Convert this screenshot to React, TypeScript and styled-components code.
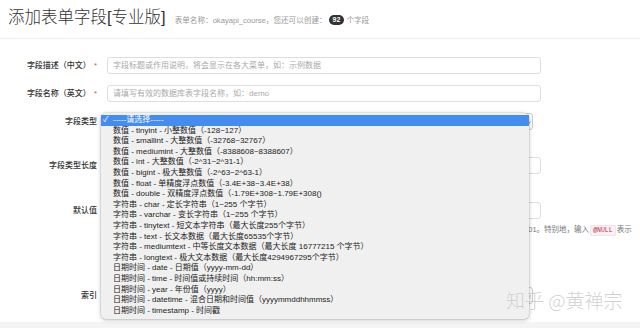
import styled, { createGlobalStyle } from 'styled-components';

const GlobalStyle = createGlobalStyle`
  body {
    margin: 0;
    background: #fff;
    font-family: 'Liberation Sans', 'Noto Sans CJK SC', sans-serif;
    color: #333;
  }
`;

const FONT = `'Liberation Sans', 'Noto Sans CJK SC', sans-serif`;

const Page = styled.div`
  position: relative;
  width: 640px;
  height: 328px;
  overflow: hidden;
  display: flex;
  flex-direction: column;
`;

const Header = styled.div`
  display: flex;
  align-items: baseline;
  gap: 9px;
  height: 39px;
  box-sizing: border-box;
  padding: 5px 8px 0;
  border-bottom: 1px solid #eee;
`;

const Title = styled.h1`
  margin: 0;
  font-family: ${FONT};
  font-size: 16.5px;
  line-height: 24px;
  font-weight: 300;
  color: #333;
`;

const Meta = styled.span`
  display: flex;
  align-items: center;
  font-size: 7.6px;
  color: #999;
`;

const Badge = styled.span`
  display: inline-block;
  margin: 0 2px;
  padding: 0 4px;
  height: 10px;
  line-height: 10px;
  border-radius: 5px;
  background: #333;
  color: #fff;
  font-size: 7px;
  font-weight: bold;
`;

const Form = styled.div`
  flex: 1;
  padding-top: 18px;
`;

const Group = styled.div<{ $gap: number }>`
  display: grid;
  grid-template-columns: 97px 434px;
  column-gap: 10px;
  margin-bottom: ${({ $gap }) => $gap}px;
`;

const Label = styled.label`
  text-align: right;
  font-size: 8px;
  line-height: 17px;
  font-weight: 500;
  color: #333;
`;

const Required = styled.span`
  color: #d9534f;
  margin-left: 3px;
`;

const Control = styled.div`
  position: relative;
`;

const Input = styled.div`
  height: 17px;
  box-sizing: border-box;
  border: 1px solid #ddd;
  border-radius: 3px;
  padding-left: 5px;
  font-size: 8px;
  line-height: 15px;
  color: #aaa;
  background: #fff;
`;

const SelectBox = styled.div`
  position: relative;
  width: 426px;
  height: 17px;
  box-sizing: border-box;
  border: 1px solid #ccc;
  border-radius: 3px;
  background: #fff;

  svg {
    position: absolute;
    right: 1px;
    top: 6px;
  }
`;

const Help = styled.div`
  margin-top: 5px;
  font-size: 7.5px;
  line-height: 12px;
  color: #777;
  white-space: nowrap;
`;

const Code = styled.code`
  padding: 1px 2px;
  margin: 0 1px;
  font-family: 'Liberation Mono', monospace;
  font-size: 6.5px;
  color: #c7254e;
  background: #f9f2f4;
  border: 1px solid #f3e3e8;
  border-radius: 2px;
`;

const Popup = styled.ul`
  position: absolute;
  top: 0;
  left: -6px;
  width: 428px;
  height: 206px;
  box-sizing: border-box;
  margin: 0;
  padding: 2px 0 0;
  list-style: none;
  background: #f0f0f0;
  border-radius: 5px;
  box-shadow: 0 1px 4px rgba(0, 0, 0, 0.25), 0 0 0 0.5px rgba(0, 0, 0, 0.12);
  z-index: 2;
`;

const Option = styled.li<{ $active?: boolean }>`
  position: relative;
  height: 10.6px;
  line-height: 10.6px;
  padding-left: 12px;
  font-size: 8px;
  white-space: nowrap;
  color: ${({ $active }) => ($active ? '#fff' : '#222')};
  background: ${({ $active }) => ($active ? '#448cf0' : 'transparent')};
`;

const Check = styled.span`
  position: absolute;
  left: 2px;
  top: 0;
`;

const Watermark = styled.div`
  position: absolute;
  left: 506px;
  top: 289px;
  font-family: 'Noto Sans CJK SC', sans-serif;
  font-size: 19px;
  line-height: 22px;
  font-weight: 300;
  color: rgba(140, 140, 140, 0.42);
  text-shadow: 0 0 1px rgba(255, 255, 255, 0.9);
  white-space: nowrap;
  z-index: 3;
`;

const Footer = styled.div`
  height: 6px;
  background: #f4f4f4;
`;

const options = [
  '数值 - tinyint - 小整数值（-128~127）',
  '数值 - smallint - 大整数值（-32768~32767）',
  '数值 - mediumint - 大整数值（-8388608~8388607）',
  '数值 - int - 大整数值（-2^31~2^31-1）',
  '数值 - bigint - 极大整数值（-2^63~2^63-1）',
  '数值 - float - 单精度浮点数值（-3.4E+38~3.4E+38）',
  '数值 - double - 双精度浮点数值（-1.79E+308~1.79E+308()',
  '字符串 - char - 定长字符串（1~255 个字节）',
  '字符串 - varchar - 变长字符串（1~255 个字节）',
  '字符串 - tinytext - 短文本字符串（最大长度255个字节）',
  '字符串 - text - 长文本数据（最大长度65535个字节）',
  '字符串 - mediumtext - 中等长度文本数据（最大长度 16777215 个字节）',
  '字符串 - longtext - 极大文本数据（最大长度4294967295个字节）',
  '日期时间 - date - 日期值（yyyy-mm-dd）',
  '日期时间 - time - 时间值或持续时间（hh:mm:ss）',
  '日期时间 - year - 年份值（yyyy）',
  '日期时间 - datetime - 混合日期和时间值（yyyymmddhhmmss）',
  '日期时间 - timestamp - 时间戳',
];

const Chevron = () => (
  <svg width="4" height="5" viewBox="0 0 4 5">
    <path d="M0.5 1.5 L2 3.5 L3.5 1.5" fill="none" stroke="#666" strokeWidth="0.7" />
  </svg>
);

export default function App() {
  return (
    <Page>
      <GlobalStyle />
      <Header>
        <Title>添加表单字段[专业版]</Title>
        <Meta>
          表单名称：okayapi_course，您还可以创建：<Badge>92</Badge>个字段
        </Meta>
      </Header>

      <Form>
        <Group $gap={11}>
          <Label>
            字段描述（中文）<Required>*</Required>
          </Label>
          <Input>字段标题或作用说明，将会显示在各大菜单，如：示例数据</Input>
        </Group>

        <Group $gap={11}>
          <Label>
            字段名称（英文）<Required>*</Required>
          </Label>
          <Input>请填写有效的数据库表字段名称，如：demo</Input>
        </Group>

        <Group $gap={27}>
          <Label>字段类型</Label>
          <Control>
            <SelectBox>
              <Chevron />
            </SelectBox>
            <Popup>
              <Option $active>
                <Check>✓</Check>-----请选择-----
              </Option>
              {options.map(o => (
                <Option key={o}>{o}</Option>
              ))}
            </Popup>
          </Control>
        </Group>

        <Group $gap={28}>
          <Label>字段类型长度</Label>
          <Input />
        </Group>

        <Group $gap={50}>
          <Label>默认值</Label>
          <Control>
            <Input />
            <Help>
              默认值，选填，当新增数据时若未指定该字段的值，数据库将会自动使用此处设置的默认值进行填充，例如：0、abc、2019-01-01。特别地，输入
              <Code>@NULL</Code>表示
            </Help>
          </Control>
        </Group>

        <Group $gap={0}>
          <Label>索引</Label>
          <Control>
            <SelectBox>
              <Chevron />
            </SelectBox>
          </Control>
        </Group>
      </Form>

      <Footer />
      <Watermark>知乎 @黄禅宗</Watermark>
    </Page>
  );
}
